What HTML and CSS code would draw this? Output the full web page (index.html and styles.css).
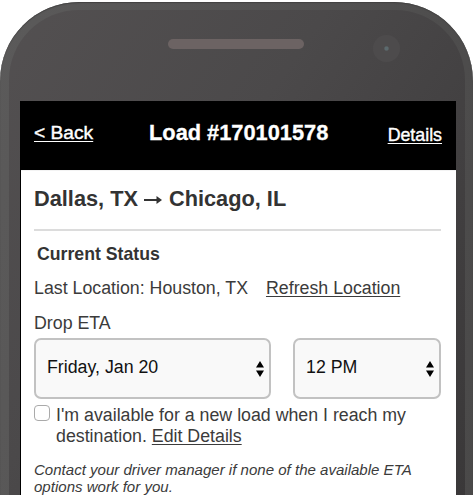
FILE: index.html
```html
<!DOCTYPE html>
<html lang="en">
<head>
<meta charset="utf-8">
<title>Load #170101578</title>
<link rel="stylesheet" href="styles.css">
</head>
<body>
<div class="phone">
  <div class="bezel">
    <div class="speaker"></div>
    <div class="camera"></div>
    <main class="screen">
      <header class="bar">
        <a class="back">&lt; Back</a>
        <h1 class="title">Load #170101578</h1>
        <a class="details">Details</a>
      </header>
      <section class="content">
        <h2 class="route"><span>Dallas, TX</span><svg class="arrow" viewBox="0 0 18 10"><path d="M0 5H14" stroke="currentColor" stroke-width="2"/><path d="M12.5 1L18 5L12.5 9Z" fill="currentColor"/></svg><span>Chicago, IL</span></h2>
        <h3 class="status">Current Status</h3>
        <p class="location"><span>Last Location: Houston, TX</span><a>Refresh Location</a></p>
        <p class="label">Drop ETA</p>
        <div class="selects">
          <div class="select date"><span>Friday, Jan 20</span><svg class="sort" viewBox="0 0 8 16"><path d="M4 0L8 6.5H0ZM0 9.5H8L4 16Z"/></svg></div>
          <div class="select time"><span>12 PM</span><svg class="sort" viewBox="0 0 8 16"><path d="M4 0L8 6.5H0ZM0 9.5H8L4 16Z"/></svg></div>
        </div>
        <div class="available">
          <span class="checkbox"></span>
          <p>I'm available for a new load when I reach my<br>destination. <a>Edit Details</a></p>
        </div>
        <p class="note">Contact your driver manager if none of the available ETA<br>options work for you.</p>
      </section>
    </main>
  </div>
</div>
</body>
</html>
```
FILE: styles.css
```css
* { box-sizing: border-box; }
body {
  margin: 0;
  height: 495px;
  padding-top: 2px;
  overflow: hidden;
  background: #fff;
  font-family: "Liberation Sans", Arial, sans-serif;
  font-size: 17.78px;
  color: #3b3b3b;
}
h1, h2, h3, p { margin: 0; white-space: nowrap; }
a { text-decoration: underline; text-decoration-thickness: 1px; text-underline-offset: 2px; }
.phone {
  width: 473px;
  height: 493px;
  padding: 8px 8px 0 9px;
  border-radius: 79px 79px 0 0;
  background: linear-gradient(100deg, #5b5a5a, #525151 60%, #4a4949);
  box-shadow: inset 0 1px 1px #434242;
}
.bezel {
  position: relative;
  height: 485px;
  padding: 91px 9px 0 11px;
  border-radius: 70px 70px 0 0;
  background: linear-gradient(125deg, #535051 0%, #4b494a 40%, #434142 65%, #3a3839 100%);
}
.speaker {
  position: absolute;
  left: 159px;
  top: 29px;
  width: 136px;
  height: 10px;
  border-radius: 5px;
  background: #6c6363;
}
.camera {
  position: absolute;
  left: 364px;
  top: 25px;
  width: 27px;
  height: 27px;
  border-radius: 50%;
  background: radial-gradient(circle, #5c6a6e 0 1.5px, #4d4b4c 2.8px);
}
.screen { height: 394px; background: #fff; border-left: 1px solid #000; }
.bar {
  display: grid;
  grid-template-columns: 115px 1fr auto;
  align-items: baseline;
  height: 69px;
  padding: 19px 14px 0 13px;
  background: #000;
  color: #fff;
}
.back { position: relative; top: -1px; font-size: 19.2px; -webkit-text-stroke: .4px #fff; }
.title { font-size: 21.8px; line-height: 26px; -webkit-text-stroke: .3px #fff; }
.details { font-size: 17.8px; -webkit-text-stroke: .4px #fff; position: relative; top: 1px; }
.content { padding: 0 15px 0 13px; border-top: 1px solid #f3f3f3; }
.route {
  display: flex;
  align-items: center;
  height: 60px;
  padding-bottom: 2px;
  border-bottom: 2px solid #dcdcdc;
  font-size: 21.75px;
  color: #333;
}
.arrow { width: 18px; height: 10px; margin: 2px 7px 0 6px; }
.status { margin: 13px 0 0 3px; font-size: 17.7px; line-height: 20px; color: #333; }
.location { display: flex; gap: 18px; margin-top: 14px; line-height: 20px; }
.label { margin-top: 15px; line-height: 20px; }
.selects { display: flex; justify-content: space-between; margin-top: 5px; }
.select {
  display: flex;
  align-items: center;
  justify-content: space-between;
  height: 61px;
  padding: 0 5px 2px 11px;
  border: 2px solid #c2c2c2;
  border-radius: 7px;
  background: #f9f9f9;
  color: #111;
}
.date { width: 237px; }
.time { width: 148px; }
.sort { width: 8px; height: 16px; margin-top: 2px; }
.available { display: flex; margin-top: 6px; line-height: 21px; }
.checkbox {
  width: 16px;
  height: 16px;
  margin: 0 6px 0 0;
  border: 1px solid #aaa;
  border-radius: 4px;
  background: #fff;
}
.note { margin-top: 15px; font-size: 15.05px; line-height: 16.5px; font-style: italic; }
```
